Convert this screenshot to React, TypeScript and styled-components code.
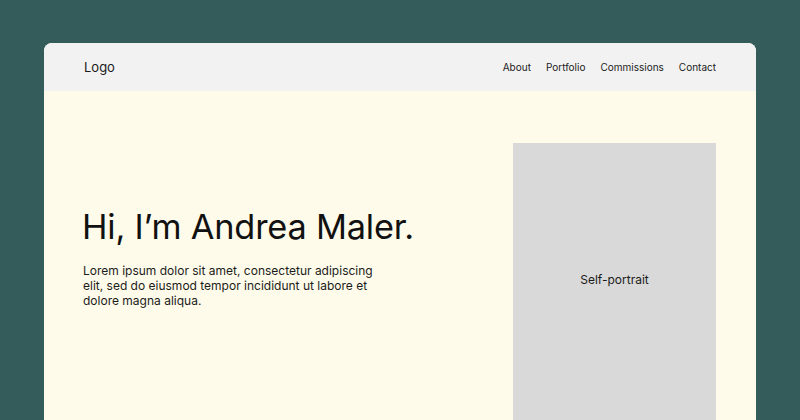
import styled, { createGlobalStyle } from "styled-components";

const GlobalStyle = createGlobalStyle`
    html, body {
        margin: 0;
        padding: 0;
        background: #335c5b;
        font-family: Inter, "Noto Sans", sans-serif;
        color: #1b1b1b;
    }
`;

const Page = styled.div`
    height: 420px;
    overflow: hidden;
    padding: 43px 44px 0 44px;
    box-sizing: border-box;
`;

const Card = styled.div`
    width: 712px;
    height: 400px;
    border-radius: 8px 8px 0 0;
    overflow: hidden;
    background: #fffbea;
    display: flex;
    flex-flow: column;
`;

const Header = styled.header`
    height: 48px;
    flex: none;
    display: flex;
    align-items: center;
    justify-content: space-between;
    padding: 0 40px;
    background: #f2f2f2;
`;

const Logo = styled.div`
    font-size: 13px;
    font-weight: 400;
`;

const Nav = styled.nav`
    display: flex;
    gap: 15px;
    font-size: 10px;
`;

const NavLink = styled.a`
    color: #1b1b1b;
    text-decoration: none;
`;

const Hero = styled.section`
    display: grid;
    grid-template-columns: 1fr 203px;
    padding: 52px 40px 0 39px;
    flex: 1;
`;

const Intro = styled.div`
    padding-top: 63px;
`;

const Heading = styled.h1`
    margin: 0;
    font-size: 34.3px;
    font-weight: 400;
    line-height: 1.2;
    letter-spacing: -0.2px;
    margin-left: -1px;
    color: #111;
`;

const Lead = styled.p`
    margin: 16px 0 0;
    max-width: 300px;
    font-size: 12px;
    line-height: 15px;
`;

const Portrait = styled.div`
    background: #d9d9d9;
    height: 320px;
    display: flex;
    justify-content: center;
    padding-top: 129px;
    box-sizing: border-box;
    font-size: 12px;
`;

export default function App() {
    return (
        <>
            <GlobalStyle />
            <Page>
                <Card>
                    <Header>
                        <Logo>Logo</Logo>
                        <Nav>
                            {["About", "Portfolio", "Commissions", "Contact"].map(item => (
                                <NavLink key={item} href="#">{item}</NavLink>
                            ))}
                        </Nav>
                    </Header>
                    <Hero>
                        <Intro>
                            <Heading>Hi, I’m Andrea Maler.</Heading>
                            <Lead>
                                Lorem ipsum dolor sit amet, consectetur adipiscing elit, sed do eiusmod tempor incididunt ut labore et dolore magna aliqua.
                            </Lead>
                        </Intro>
                        <Portrait>Self-portrait</Portrait>
                    </Hero>
                </Card>
            </Page>
        </>
    );
}
